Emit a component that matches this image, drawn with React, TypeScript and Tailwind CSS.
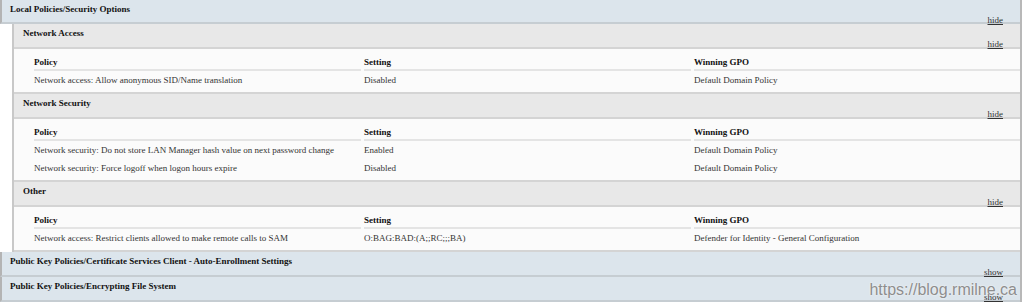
const font = { fontFamily: '"Liberation Serif", "Times New Roman", serif' };

type Row = { policy: string; setting: string; gpo: string };

const sections: { title: string; rows: Row[] }[] = [
  {
    title: "Network Access",
    rows: [
      {
        policy: "Network access: Allow anonymous SID/Name translation",
        setting: "Disabled",
        gpo: "Default Domain Policy",
      },
    ],
  },
  {
    title: "Network Security",
    rows: [
      {
        policy: "Network security: Do not store LAN Manager hash value on next password change",
        setting: "Enabled",
        gpo: "Default Domain Policy",
      },
      {
        policy: "Network security: Force logoff when logon hours expire",
        setting: "Disabled",
        gpo: "Default Domain Policy",
      },
    ],
  },
  {
    title: "Other",
    rows: [
      {
        policy: "Network access: Restrict clients allowed to make remote calls to SAM",
        setting: "O:BAG:BAD:(A;;RC;;;BA)",
        gpo: "Defender for Identity - General Configuration",
      },
    ],
  },
];

function Toggle({ label }: { label: string }) {
  return (
    <div className="flex justify-end pr-[17px] text-[9px] leading-[10px] text-[#333] underline">
      {label}
    </div>
  );
}

function CategoryHeader({ title, link, h }: { title: string; link: string; h: string }) {
  return (
    <div className={`${h} bg-[#dce5ec] border-l-2 border-l-[#b4b4b4] border-b-2 border-b-[#c6cdd2] pt-[3px]`}>
      <div className="pl-[8px] text-[9px] leading-[12px] font-bold text-[#111]">{title}</div>
      <Toggle label={link} />
    </div>
  );
}

function Section({ title, rows }: { title: string; rows: Row[] }) {
  return (
    <div>
      <div className="h-[25px] bg-[#e8e8e8] border-b-2 border-b-[#d4d4d4] pt-[3px]">
        <div className="pl-[9px] text-[9px] leading-[12px] font-bold text-[#111]">{title}</div>
        <Toggle label="hide" />
      </div>
      <div className="bg-[#fbfbfb] border-b-2 border-b-[#d4d4d4] pl-[20px] pt-[4px] pb-[3px]">
        <div className="grid grid-cols-[330px_330px_1fr] text-[9px]">
          <div className="h-[18px] mr-[3px] border-b-2 border-b-[#e4e4e4] font-bold leading-[18px] text-[#111]">Policy</div>
          <div className="h-[18px] mr-[3px] border-b-2 border-b-[#e4e4e4] font-bold leading-[18px] text-[#111]">Setting</div>
          <div className="h-[18px] border-b-2 border-b-[#e4e4e4] font-bold leading-[18px] text-[#111]">Winning GPO</div>
          {rows.map((r) => (
            <>
              <div key={r.policy + "p"} className="h-[18px] leading-[18px] text-[#333]">{r.policy}</div>
              <div key={r.policy + "s"} className="h-[18px] leading-[18px] text-[#333]">{r.setting}</div>
              <div key={r.policy + "g"} className="h-[18px] leading-[18px] text-[#333]">{r.gpo}</div>
            </>
          ))}
        </div>
      </div>
    </div>
  );
}

export default function App() {
  return (
    <div className="relative w-[1024px] h-[302px] overflow-hidden bg-white" style={font}>
      <div className="w-[1022px] border-r-2 border-r-[#b8b8b8]">
        <CategoryHeader title="Local Policies/Security Options" link="hide" h="h-[24px]" />
        <div className="ml-[12px] border-l-2 border-l-[#c8c8c8]">
          {sections.map((s) => (
            <Section key={s.title} title={s.title} rows={s.rows} />
          ))}
        </div>
        <CategoryHeader
          title="Public Key Policies/Certificate Services Client - Auto-Enrollment Settings"
          link="show"
          h="h-[25px]"
        />
        <CategoryHeader title="Public Key Policies/Encrypting File System" link="show" h="h-[25px]" />
      </div>
      <div
        className="absolute right-[7px] bottom-[2px] text-[16px] leading-[20px] text-[#8d8d8d]"
        style={{ fontFamily: '"Liberation Sans", Arial, sans-serif', textShadow: "0 0 2px #fff" }}
      >
        https://blog.rmilne.ca
      </div>
    </div>
  );
}
